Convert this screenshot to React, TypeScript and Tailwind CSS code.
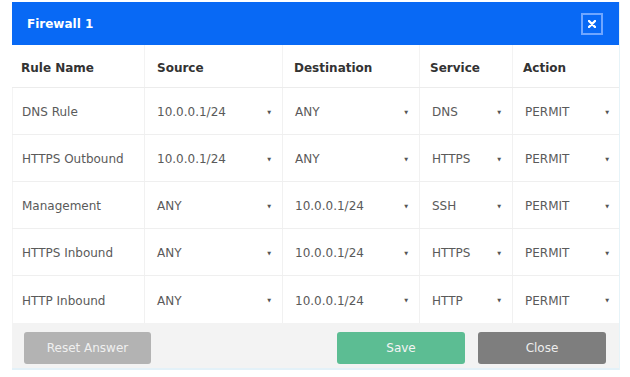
import React from 'react'

interface Rule {
  name: string
  source: string
  destination: string
  service: string
  action: string
}

const rules: Rule[] = [
  { name: 'DNS Rule', source: '10.0.0.1/24', destination: 'ANY', service: 'DNS', action: 'PERMIT' },
  { name: 'HTTPS Outbound', source: '10.0.0.1/24', destination: 'ANY', service: 'HTTPS', action: 'PERMIT' },
  { name: 'Management', source: 'ANY', destination: '10.0.0.1/24', service: 'SSH', action: 'PERMIT' },
  { name: 'HTTPS Inbound', source: 'ANY', destination: '10.0.0.1/24', service: 'HTTPS', action: 'PERMIT' },
  { name: 'HTTP Inbound', source: 'ANY', destination: '10.0.0.1/24', service: 'HTTP', action: 'PERMIT' },
]

const cols = 'grid grid-cols-[133px_138px_137px_93px_107px]'

function SelectCell({ value, last }: { value: string; last?: boolean }) {
  return (
    <div className={`flex items-center justify-between pl-[12px] pr-[11px] pt-[2px] ${last ? '' : 'border-r border-[#f1f1f1]'}`}>
      <span>{value}</span>
      <span className="text-[5px] text-[#555] leading-none">▼</span>
    </div>
  )
}

export default function App() {
  return (
    <div className="w-[630px] h-[377px] bg-white pt-[2px] pl-[12px]" style={{ fontFamily: '"DejaVu Sans", Verdana, sans-serif' }}>
      <div className="w-[608px] border-r border-[#e6f3f8]">
        {/* Header */}
        <div className="h-[43px] bg-[#0869f5] flex items-center justify-between pl-[15px] pr-[16px]">
          <span className="text-white font-bold text-[12px]">Firewall 1</span>
          <button className="w-[22px] h-[22px] border-2 border-[#6fa6ff] flex items-center justify-center">
            <svg width="8" height="8" viewBox="0 0 8 8">
              <path d="M1 1L7 7M7 1L1 7" stroke="white" strokeWidth="2.4" strokeLinecap="round" />
            </svg>
          </button>
        </div>

        {/* Table head */}
        <div className={`${cols} h-[43px] border-b border-[#ececec] text-[12px] font-bold text-[#333]`}>
          <div className="flex items-center pl-[9px] pt-[3px] border-r border-[#f3f3f3]">Rule Name</div>
          <div className="flex items-center pl-[12px] pt-[3px] border-r border-[#f3f3f3]">Source</div>
          <div className="flex items-center pl-[11px] pt-[3px] border-r border-[#f3f3f3]">Destination</div>
          <div className="flex items-center pl-[10px] pt-[3px] border-r border-[#f3f3f3]">Service</div>
          <div className="flex items-center pl-[10px] pt-[3px]">Action</div>
        </div>

        {/* Rows */}
        {rules.map((r, i) => (
          <div
            key={r.name}
            className={`${cols} h-[47px] text-[12px] text-[#5a5a5a] ${i < rules.length - 1 ? 'border-b border-[#efefef]' : ''}`}
          >
            <div className="flex items-center pl-[9px] pt-[2px] border-r border-[#f1f1f1] border-l border-l-[#f4f4f4]">{r.name}</div>
            <SelectCell value={r.source} />
            <SelectCell value={r.destination} />
            <SelectCell value={r.service} />
            <SelectCell value={r.action} last />
          </div>
        ))}

        {/* Footer */}
        <div className="h-[47px] bg-[#f3f3f3] border-b-2 border-[#e3f1f8] flex items-start pt-[9px] pl-[12px] pr-[13px] text-[12px]">
          <button className="w-[127px] h-[32px] rounded-[3px] bg-[#b3b3b3] text-[#f0f0f0]">Reset Answer</button>
          <div className="flex-1" />
          <button className="w-[128px] h-[32px] rounded-[3px] bg-[#5cbd93] text-[#f4f4f4]">Save</button>
          <button className="w-[128px] h-[32px] rounded-[3px] bg-[#7e7e7e] text-[#ededed] ml-[13px]">Close</button>
        </div>
      </div>
    </div>
  )
}
